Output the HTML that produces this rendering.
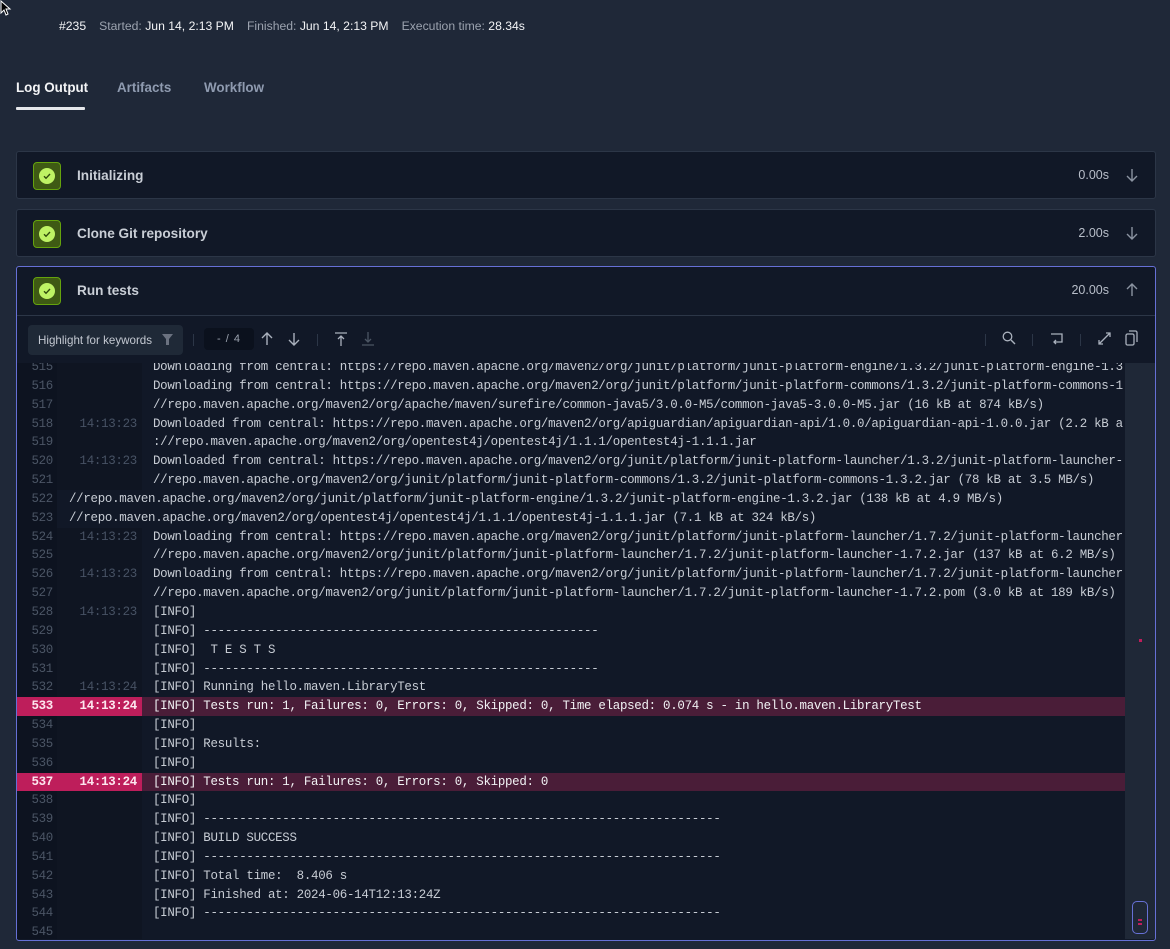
<!DOCTYPE html>
<html><head><meta charset="utf-8">
<style>
*{box-sizing:border-box;margin:0;padding:0}
body{width:1170px;height:949px;background:#1f2838;font-family:"Liberation Sans",sans-serif;position:relative;overflow:hidden;color:#e5e7eb}
.meta{position:absolute;top:19px;left:59px;font-size:12.2px;color:#9ca3af;white-space:nowrap}
.meta b{font-weight:normal;color:#f3f4f6}
.meta span{margin-right:13px}
.tabs{position:absolute;top:80px;left:16px;font-size:13.4px;font-weight:bold}
.tab{position:absolute;white-space:nowrap;color:#8f9bb0}
.tab.a{color:#f3f4f6}
.uline{position:absolute;left:16px;top:107px;width:69px;height:3px;background:#e5e7eb;border-radius:1px}
.panel{position:absolute;left:16px;width:1140px;background:#111827;border:1px solid #2c3647;border-radius:3px}
.hd{position:absolute;left:0;right:0;top:0;height:47px}
.chk{position:absolute;left:16px;top:10px;width:28px;height:28px;background:#3f5a14;border:1px solid #65a30d;border-radius:4px}
.chk i{position:absolute;left:5px;top:5px;width:16px;height:16px;border-radius:50%;background:#bef264}
.chk svg{position:absolute;left:5px;top:5px}
.ttl{position:absolute;left:60px;top:16px;font-size:13.6px;font-weight:bold;color:#c9ced6}
.dur{position:absolute;right:46px;top:16px;font-size:12.5px;color:#b8bec9}
.arr{position:absolute;right:16px;top:15px}
.tb{position:absolute;left:0;right:0;top:48px;height:48px;border-top:1px solid #2c3647}
.hl{position:absolute;left:11px;top:9px;width:155px;height:30px;background:#1f2937;border-radius:4px;font-size:11.6px;color:#c3c8d1;padding:9px 0 0 10px}
.sep{position:absolute;top:18px;width:1px;height:12px;background:#2c3647}
.cnt{position:absolute;left:187px;top:12px;width:50px;height:22px;background:#0b111d;border-radius:4px;font-size:11px;color:#9ca3af;padding:5px 0 0 13px;letter-spacing:1px}
.log{position:absolute;left:0;top:96px;width:1108px;height:576px;overflow:hidden;font-family:"Liberation Mono",monospace;font-size:12.45px;letter-spacing:-0.28px}
.rows{position:absolute;top:-5px;left:0;width:100%}
.r{position:relative;height:18.85px;line-height:18.85px;white-space:pre;background:#111827}
.r .n{position:absolute;left:0;width:40px;height:100%;background:#0d1320;color:#4b5565;text-align:right;padding-right:4px}
.r .t{position:absolute;left:40px;width:85px;height:100%;background:#0f1522;color:#475264;text-align:right;padding-right:5px}
.r .x{position:absolute;left:136px;color:#c7ccd4}
.r.w .x{left:52px}
.r.w .t{display:none}
.r.h{background:#4a1d38}
.r.h .n,.r.h .t{background:#be1e5b;color:#fde7ef;font-weight:bold}
.r.h .x{color:#f1f2f4}
.sb{position:absolute;right:0;top:96px;width:30px;height:576px;background:#1f2837}
</style></head><body>
<svg style="position:absolute;left:0;top:0" width="12" height="16" viewBox="0 0 12 16"><path d="M1 1v12l3-3 2 5 2-1-2-5h4z" fill="#000" stroke="#fff" stroke-width="1"/></svg>
<div class="meta"><span><b>#235</b></span><span>Started: <b>Jun 14, 2:13 PM</b></span><span>Finished: <b>Jun 14, 2:13 PM</b></span><span>Execution time: <b>28.34s</b></span></div>
<div class="tabs"><div class="tab a" style="left:0">Log Output</div><div class="tab" style="left:101px">Artifacts</div><div class="tab" style="left:188px">Workflow</div></div>
<div class="uline"></div>

<div class="panel" style="top:151px;height:48px">
<div class="hd"><div class="chk"><i></i><svg width="16" height="16" viewBox="0 0 16 16"><path d="M5 8.3l2 2 4-4.3" fill="none" stroke="#2f4a0c" stroke-width="1.4"/></svg></div><div class="ttl">Initializing</div><div class="dur">0.00s</div>
<svg class="arr" width="14" height="16" viewBox="0 0 14 16"><path d="M7 2v12M2 9l5 5 5-5" fill="none" stroke="#8b93a1" stroke-width="1.4"/></svg></div></div>

<div class="panel" style="top:209px;height:48px">
<div class="hd"><div class="chk"><i></i><svg width="16" height="16" viewBox="0 0 16 16"><path d="M5 8.3l2 2 4-4.3" fill="none" stroke="#2f4a0c" stroke-width="1.4"/></svg></div><div class="ttl">Clone Git repository</div><div class="dur">2.00s</div>
<svg class="arr" width="14" height="16" viewBox="0 0 14 16"><path d="M7 2v12M2 9l5 5 5-5" fill="none" stroke="#8b93a1" stroke-width="1.4"/></svg></div></div>

<div class="panel" style="top:266px;height:675px;border-color:#6670d6;overflow:hidden">
<div class="hd"><div class="chk"><i></i><svg width="16" height="16" viewBox="0 0 16 16"><path d="M5 8.3l2 2 4-4.3" fill="none" stroke="#2f4a0c" stroke-width="1.4"/></svg></div><div class="ttl">Run tests</div><div class="dur">20.00s</div>
<svg class="arr" width="14" height="16" viewBox="0 0 14 16"><path d="M7 14V2M2 7l5-5 5 5" fill="none" stroke="#8b93a1" stroke-width="1.4"/></svg></div>
<div class="tb">
<div class="hl">Highlight for keywords <svg style="position:absolute;right:10px;top:9px" width="11" height="11" viewBox="0 0 11 11"><path d="M0 0h11L7 5v6H4V5z" fill="#6b7280"/></svg></div>
<div class="sep" style="left:176px"></div>
<div class="cnt">- / 4</div>
<svg style="position:absolute;left:243px;top:16px" width="14" height="14" viewBox="0 0 14 14"><path d="M7 13V1M2 6l5-5 5 5" fill="none" stroke="#aab1bd" stroke-width="1.4"/></svg>
<svg style="position:absolute;left:270px;top:16px" width="14" height="14" viewBox="0 0 14 14"><path d="M7 1v12M2 8l5 5 5-5" fill="none" stroke="#aab1bd" stroke-width="1.4"/></svg>
<div class="sep" style="left:300px"></div>
<svg style="position:absolute;left:318px;top:16px" width="12" height="14" viewBox="0 0 12 14"><path d="M0 1h12M6 4v10M3 7l3-3 3 3" fill="none" stroke="#aab1bd" stroke-width="1.3"/></svg>
<svg style="position:absolute;left:345px;top:16px" width="12" height="14" viewBox="0 0 12 14"><path d="M0 13h12M6 0v10M3 7l3 3 3-3" fill="none" stroke="#4b5563" stroke-width="1.3"/></svg>
<div class="sep" style="left:968px"></div>
<svg style="position:absolute;left:985px;top:15px" width="14" height="14" viewBox="0 0 14 14"><circle cx="5.5" cy="5.5" r="4.3" fill="none" stroke="#aab1bd" stroke-width="1.3"/><path d="M9 9l4 4" stroke="#aab1bd" stroke-width="1.4"/></svg>
<div class="sep" style="left:1015px"></div>
<svg style="position:absolute;left:1033px;top:17px" width="13" height="12" viewBox="0 0 13 12"><path d="M1 1h11v8H4M6 7L4 9l2 2" fill="none" stroke="#aab1bd" stroke-width="1.3"/></svg>
<div class="sep" style="left:1063px"></div>
<svg style="position:absolute;left:1081px;top:16px" width="13" height="13" viewBox="0 0 13 13"><path d="M1 12L12 1M8 1h4v4M1 8v4h4" fill="none" stroke="#aab1bd" stroke-width="1.3"/></svg>
<svg style="position:absolute;left:1108px;top:14px" width="13" height="16" viewBox="0 0 13 16"><rect x="1" y="4" width="8" height="11" rx="1.5" fill="none" stroke="#aab1bd" stroke-width="1.3"/><path d="M4 1h6.5a1.5 1.5 0 0 1 1.5 1.5V12" fill="none" stroke="#aab1bd" stroke-width="1.3"/></svg>
</div>
<div class="log"><div class="rows">
<div class="r"><span class="n">515</span><span class="t"></span><span class="x">Downloading from central: https://repo.maven.apache.org/maven2/org/junit/platform/junit-platform-engine/1.3.2/junit-platform-engine-1.3</span></div>
<div class="r"><span class="n">516</span><span class="t"></span><span class="x">Downloading from central: https://repo.maven.apache.org/maven2/org/junit/platform/junit-platform-commons/1.3.2/junit-platform-commons-1</span></div>
<div class="r"><span class="n">517</span><span class="t"></span><span class="x">//repo.maven.apache.org/maven2/org/apache/maven/surefire/common-java5/3.0.0-M5/common-java5-3.0.0-M5.jar (16 kB at 874 kB/s)</span></div>
<div class="r"><span class="n">518</span><span class="t">14:13:23</span><span class="x">Downloaded from central: https://repo.maven.apache.org/maven2/org/apiguardian/apiguardian-api/1.0.0/apiguardian-api-1.0.0.jar (2.2 kB a</span></div>
<div class="r"><span class="n">519</span><span class="t"></span><span class="x">://repo.maven.apache.org/maven2/org/opentest4j/opentest4j/1.1.1/opentest4j-1.1.1.jar</span></div>
<div class="r"><span class="n">520</span><span class="t">14:13:23</span><span class="x">Downloaded from central: https://repo.maven.apache.org/maven2/org/junit/platform/junit-platform-launcher/1.3.2/junit-platform-launcher-</span></div>
<div class="r"><span class="n">521</span><span class="t"></span><span class="x">//repo.maven.apache.org/maven2/org/junit/platform/junit-platform-commons/1.3.2/junit-platform-commons-1.3.2.jar (78 kB at 3.5 MB/s)</span></div>
<div class="r w"><span class="n">522</span><span class="t"></span><span class="x">//repo.maven.apache.org/maven2/org/junit/platform/junit-platform-engine/1.3.2/junit-platform-engine-1.3.2.jar (138 kB at 4.9 MB/s)</span></div>
<div class="r w"><span class="n">523</span><span class="t"></span><span class="x">//repo.maven.apache.org/maven2/org/opentest4j/opentest4j/1.1.1/opentest4j-1.1.1.jar (7.1 kB at 324 kB/s)</span></div>
<div class="r"><span class="n">524</span><span class="t">14:13:23</span><span class="x">Downloading from central: https://repo.maven.apache.org/maven2/org/junit/platform/junit-platform-launcher/1.7.2/junit-platform-launcher</span></div>
<div class="r"><span class="n">525</span><span class="t"></span><span class="x">//repo.maven.apache.org/maven2/org/junit/platform/junit-platform-launcher/1.7.2/junit-platform-launcher-1.7.2.jar (137 kB at 6.2 MB/s)</span></div>
<div class="r"><span class="n">526</span><span class="t">14:13:23</span><span class="x">Downloading from central: https://repo.maven.apache.org/maven2/org/junit/platform/junit-platform-launcher/1.7.2/junit-platform-launcher</span></div>
<div class="r"><span class="n">527</span><span class="t"></span><span class="x">//repo.maven.apache.org/maven2/org/junit/platform/junit-platform-launcher/1.7.2/junit-platform-launcher-1.7.2.pom (3.0 kB at 189 kB/s)</span></div>
<div class="r"><span class="n">528</span><span class="t">14:13:23</span><span class="x">[INFO]</span></div>
<div class="r"><span class="n">529</span><span class="t"></span><span class="x">[INFO] -------------------------------------------------------</span></div>
<div class="r"><span class="n">530</span><span class="t"></span><span class="x">[INFO]  T E S T S</span></div>
<div class="r"><span class="n">531</span><span class="t"></span><span class="x">[INFO] -------------------------------------------------------</span></div>
<div class="r"><span class="n">532</span><span class="t">14:13:24</span><span class="x">[INFO] Running hello.maven.LibraryTest</span></div>
<div class="r h"><span class="n">533</span><span class="t">14:13:24</span><span class="x">[INFO] Tests run: 1, Failures: 0, Errors: 0, Skipped: 0, Time elapsed: 0.074 s - in hello.maven.LibraryTest</span></div>
<div class="r"><span class="n">534</span><span class="t"></span><span class="x">[INFO]</span></div>
<div class="r"><span class="n">535</span><span class="t"></span><span class="x">[INFO] Results:</span></div>
<div class="r"><span class="n">536</span><span class="t"></span><span class="x">[INFO]</span></div>
<div class="r h"><span class="n">537</span><span class="t">14:13:24</span><span class="x">[INFO] Tests run: 1, Failures: 0, Errors: 0, Skipped: 0</span></div>
<div class="r"><span class="n">538</span><span class="t"></span><span class="x">[INFO]</span></div>
<div class="r"><span class="n">539</span><span class="t"></span><span class="x">[INFO] ------------------------------------------------------------------------</span></div>
<div class="r"><span class="n">540</span><span class="t"></span><span class="x">[INFO] BUILD SUCCESS</span></div>
<div class="r"><span class="n">541</span><span class="t"></span><span class="x">[INFO] ------------------------------------------------------------------------</span></div>
<div class="r"><span class="n">542</span><span class="t"></span><span class="x">[INFO] Total time:  8.406 s</span></div>
<div class="r"><span class="n">543</span><span class="t"></span><span class="x">[INFO] Finished at: 2024-06-14T12:13:24Z</span></div>
<div class="r"><span class="n">544</span><span class="t"></span><span class="x">[INFO] ------------------------------------------------------------------------</span></div>
<div class="r"><span class="n">545</span><span class="t"></span><span class="x"></span></div>
</div></div>
<div class="sb">
<div style="position:absolute;left:14px;top:276px;width:3px;height:3px;background:#be1e5b"></div>
<div style="position:absolute;left:7px;top:538px;width:16px;height:33px;border:1.5px solid #6670d6;border-radius:5px"></div>
<div style="position:absolute;left:13px;top:556px;width:4px;height:2px;background:#be1e5b"></div>
<div style="position:absolute;left:13px;top:560px;width:4px;height:2px;background:#be1e5b"></div>
</div>
</div>
</body></html>
